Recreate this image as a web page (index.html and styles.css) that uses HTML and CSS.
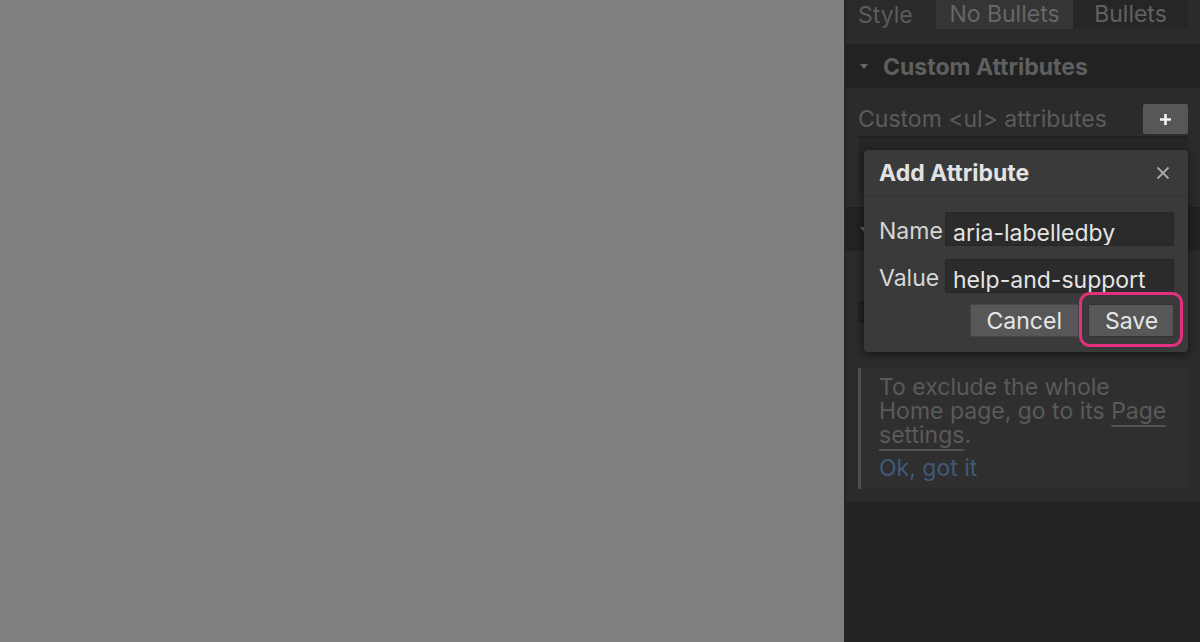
FILE: index.html
```html
<!DOCTYPE html>
<html lang="en">
<head>
    <meta charset="UTF-8">
    <title>Add Attribute</title>
    <link rel="stylesheet" href="styles.css">
</head>
<body>

<div class="canvas"></div>

<div class="panel">
    <div class="style-row">
        <span class="row-label">Style</span>
        <div class="segments">
            <span class="segment active">No Bullets</span>
            <span class="segment">Bullets</span>
        </div>
    </div>

    <div class="section-header">
        <span class="caret"></span>
        <span>Custom Attributes</span>
    </div>

    <div class="section-body">
        <div class="attr-row">
            <span class="row-label">Custom &lt;ul&gt; attributes</span>
            <button class="plus-btn" aria-label="Add">
                <svg width="13" height="13" viewBox="0 0 13 13"><path d="M6.5 1v11M1 6.5h11" stroke="#f2f2f2" stroke-width="2.6"/></svg>
            </button>
        </div>
        <div class="attr-list"></div>
    </div>

    <div class="section-header">
        <span class="caret"></span>
        <span>Search</span>
    </div>

    <div class="section-body search-body">
        <div class="toggle-row">
            <span class="check"></span>
        </div>
        <div class="info-box">
            <p>To exclude the whole Home page, go to its <span class="link">Page settings</span>.</p>
            <p class="ok">Ok, got it</p>
        </div>
    </div>

    <div class="panel-rest"></div>

    <div class="dialog">
        <div class="dialog-head">
            <span>Add Attribute</span>
            <svg class="close" width="14" height="14" viewBox="0 0 14 14"><path d="M1.5 1.5l11 11M12.5 1.5l-11 11" stroke="#a8a8a8" stroke-width="1.8"/></svg>
        </div>
        <div class="dialog-body">
            <div class="field">
                <label for="attrName">Name</label>
                <input id="attrName" type="text" value="aria-labelledby">
            </div>
            <div class="field">
                <label for="attrValue">Value</label>
                <input id="attrValue" type="text" value="help-and-support">
            </div>
            <div class="actions">
                <button class="btn">Cancel</button>
                <div class="save-wrap">
                    <button class="btn save">Save</button>
                    <span class="highlight"></span>
                </div>
            </div>
        </div>
    </div>
</div>

</body>
</html>
```

FILE: styles.css
```css
* {
    box-sizing: border-box;
}

body {
    margin: 0;
    height: 642px;
    display: flex;
    overflow: hidden;
    font-family: Inter, 'Noto Sans', sans-serif;
    font-size: 23px;
    background: #808080;
}

.canvas {
    flex: 1;
    background: #808080;
}

.panel {
    position: relative;
    width: 356px;
    display: flex;
    flex-direction: column;
    background: #232323;
    border-left: 2px solid #252525;
}

.row-label {
    color: #5b5b5b;
}

.style-row {
    height: 44px;
    padding: 0 12px 15px 12px;
    display: flex;
    align-items: center;
    background: #2b2b2b;
}

.style-row .row-label {
    width: 78px;
}

.segments {
    flex: 1;
    height: 29px;
    display: flex;
    background: #262626;
    border-radius: 0 0 3px 3px;
}

.segment {
    flex: 1;
    display: flex;
    align-items: center;
    justify-content: center;
    color: #616161;
    padding-bottom: 1px;
}

.segment.active {
    flex: 0 0 137px;
    background: #353535;
    color: #666;
}

.section-header {
    height: 44px;
    padding: 0 14px;
    display: flex;
    align-items: center;
    gap: 15px;
    background: #222;
    color: #5f5f5f;
    font-weight: 700;
    border-top: 1px solid #1f1f1f;
}

.caret {
    width: 0;
    height: 0;
    border-left: 4px solid transparent;
    border-right: 4px solid transparent;
    border-top: 5px solid #666;
}

.section-body {
    background: #2b2b2b;
    padding: 16px 12px 15px 12px;
}

.attr-row {
    height: 30px;
    display: flex;
    align-items: center;
    justify-content: space-between;
}

.plus-btn {
    width: 45px;
    height: 30px;
    border: none;
    border-radius: 2px;
    background: #575757;
    display: flex;
    align-items: center;
    justify-content: center;
    padding: 0;
}

.attr-list {
    margin-top: 2px;
    height: 56px;
    background: #262626;
    border-top: 2px solid #202020;
}

.search-body {
    padding-top: 47px;
    padding-bottom: 13px;
}

.toggle-row {
    height: 67px;
}

.check {
    display: block;
    width: 22px;
    height: 22px;
    margin-top: 3px;
    background: #222;
    border-radius: 2px;
}

.info-box {
    background: #2f2f2f;
    border-left: 3px solid #4e4e4e;
    padding: 7px 12px 9px 18px;
    color: #5a5a5a;
    line-height: 24px;
}

.info-box p {
    margin: 0;
}

.link {
    text-decoration: underline;
    text-decoration-color: #515151;
    text-underline-offset: 6px;
}

.info-box .ok {
    margin-top: 9px;
    color: #3f5a79;
}

.panel-rest {
    flex: 1;
    background: #232323;
}

.dialog {
    position: absolute;
    top: 150px;
    left: 18px;
    width: 324px;
    background: #3a3a3a;
    border-radius: 4px;
    box-shadow: 0 2px 10px rgba(0, 0, 0, 0.55);
    color: #dadada;
}

.dialog-head {
    height: 47px;
    padding: 0 18px 0 15px;
    display: flex;
    align-items: center;
    justify-content: space-between;
    font-weight: 700;
    color: #e2e2e2;
    border-bottom: 1px solid #323232;
}

.dialog-body {
    padding: 15px 14px 15px 15px;
}

.field {
    display: flex;
    align-items: center;
    margin-bottom: 13px;
}

.field label {
    flex: 0 0 66px;
    padding-top: 3px;
    color: #d6d6d6;
}

.field input {
    flex: 1;
    min-width: 0;
    height: 34px;
    background: #2b2b2b;
    border: 1px solid #262626;
    border-radius: 2px;
    padding: 8px 7px 0 7px;
    font-family: inherit;
    font-size: 23px;
    line-height: 26px;
    color: #e4e4e4;
    outline: none;
}

.actions {
    display: flex;
    justify-content: flex-end;
    gap: 9px;
    margin-top: -2px;
}

.btn {
    height: 33px;
    padding: 0 16px;
    background: #575757;
    border: 1px solid #464646;
    border-radius: 2px;
    font-family: inherit;
    font-size: 23px;
    color: #e6e6e6;
}

.save-wrap {
    position: relative;
}

.save {
    width: 86px;
    border-color: #333;
}

.highlight {
    position: absolute;
    top: -12px;
    left: -9px;
    right: -9px;
    bottom: -10px;
    border: 3px solid #e2307f;
    border-radius: 11px;
}
```
